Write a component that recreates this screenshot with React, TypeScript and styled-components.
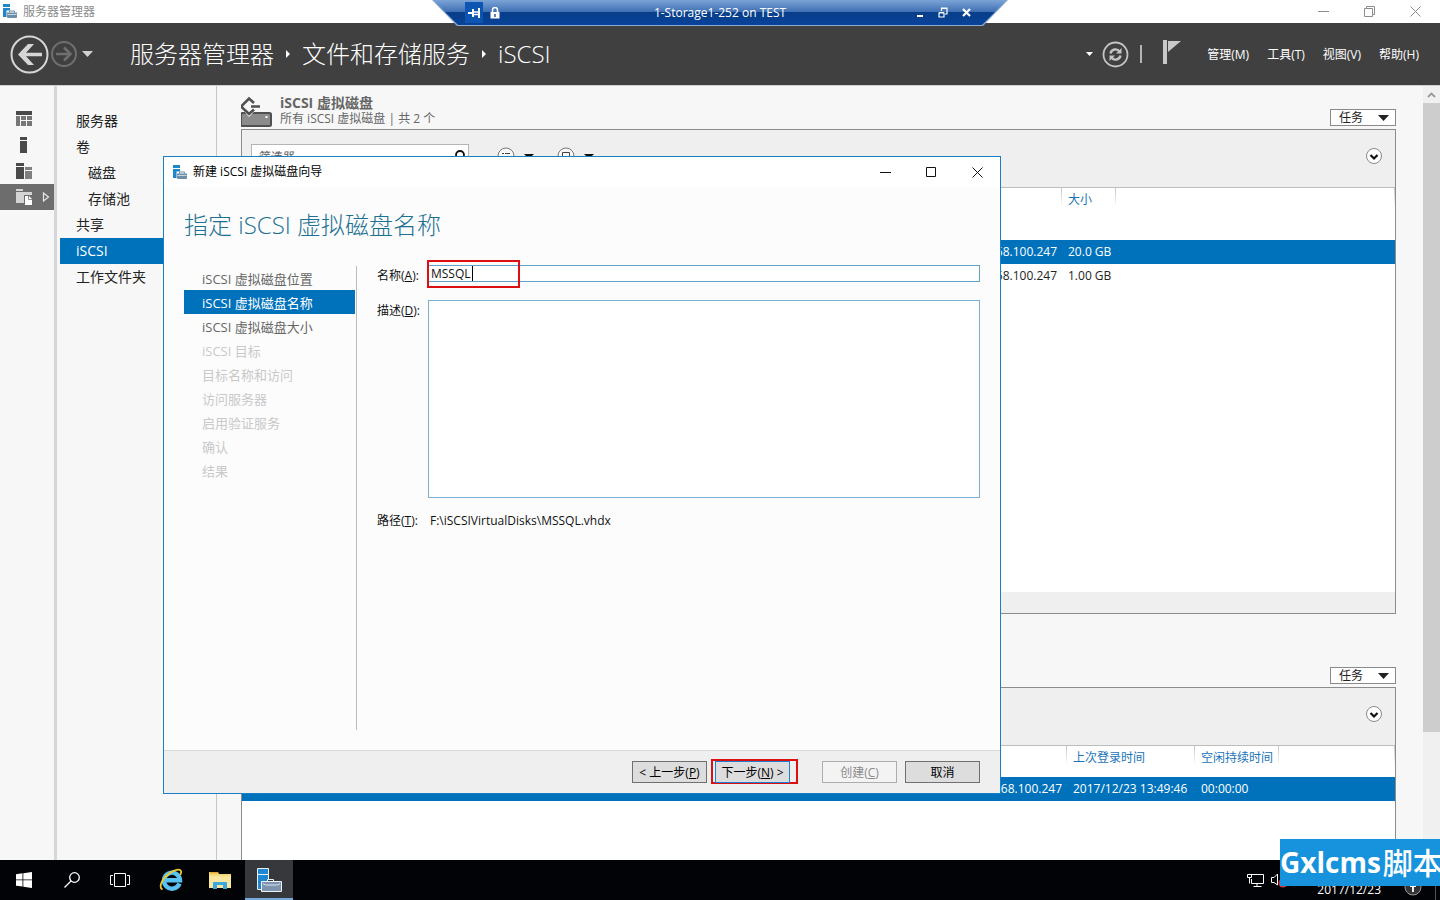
import React from "react";
import styled, { createGlobalStyle, css } from "styled-components";

const BLUE = "#0072bc";

const GlobalStyle = createGlobalStyle`
  *, *::before, *::after { box-sizing: border-box; }
  html, body { margin: 0; padding: 0; }
  body {
    font-family: "Open Sans", "Noto Sans CJK SC", sans-serif;
    font-size: 12px;
    line-height: 16px;
    color: #222;
    overflow: hidden;
  }
  button, input, textarea { font: inherit; color: inherit; margin: 0; padding: 0; border-radius: 0; }
  button { background: none; border: 0; white-space: nowrap; }
  h1, h2, h3, p, ul, ol, dl, dd { margin: 0; padding: 0; font-weight: inherit; }
  ul, ol { list-style: none; }
  a { color: inherit; text-decoration: none; }
  svg { display: block; flex: none; }
`;

const Desktop = styled.div`
  position: relative;
  display: grid;
  grid-template-rows: 23px 62px minmax(0, 1fr) 40px;
  height: 100vh;
  background: #f7f7f7;
`;

/* ---------- window title bar ---------- */

const TitleBar = styled.header`
  display: flex;
  align-items: center;
  gap: 6px;
  padding: 0 2px;
  background: #fff;
  color: #8a8a8a;
`;

const WindowControls = styled.div<{ $dark?: boolean }>`
  display: flex;
  margin-left: auto;
  color: ${(p) => (p.$dark ? "#111" : "#8c8c8c")};
`;

const WindowButton = styled.button`
  display: grid;
  place-items: center;
  width: 46px;
  height: 20px;
`;

/* ---------- remote session bar ---------- */

const SessionBar = styled.div`
  position: absolute;
  z-index: 3;
  top: 0;
  left: 50%;
  width: 576px;
  height: 26px;
  transform: translateX(-50%);
  padding: 0 1px 1px;
  background: #8fa9cf;
  clip-path: polygon(0 0, 100% 0, calc(100% - 25px) 100%, 25px 100%);
`;

const SessionInner = styled.div`
  display: grid;
  grid-template-columns: 1fr auto 1fr;
  align-items: center;
  height: 25px;
  padding: 0 32px;
  color: #fff;
  background: linear-gradient(#7ba3d6 0, #3f6fb3 12px, #083e88 12px, #08429a 25px);
  clip-path: polygon(0 0, 100% 0, calc(100% - 25px) 100%, 25px 100%);
`;

const SessionGroup = styled.div<{ $end?: boolean }>`
  display: flex;
  align-items: center;
  gap: ${(p) => (p.$end ? "5px" : "3px")};
  justify-content: ${(p) => (p.$end ? "flex-end" : "flex-start")};
`;

const SessionButton = styled.button<{ $on?: boolean }>`
  display: grid;
  place-items: center;
  width: 18px;
  height: 21px;
  background: ${(p) => (p.$on ? "#0c55b0" : "transparent")};
`;

/* ---------- dark header ---------- */

const Header = styled.div`
  display: flex;
  align-items: center;
  justify-content: space-between;
  padding: 0 21px 0 10px;
  background: #404040;
  color: #fff;
`;

const HeaderSide = styled.div`
  display: flex;
  align-items: center;
`;

const NavButton = styled.button`
  display: grid;
  place-items: center;
`;

const Breadcrumb = styled.nav`
  display: flex;
  align-items: center;
  gap: 12px;
  margin-left: 36px;
  font-size: 24px;
  line-height: 32px;
  font-weight: 300;
`;

const MenuBar = styled.nav`
  display: flex;
  gap: 18px;
  margin-left: 26px;
  padding-top: 2px;
  line-height: 20px;
`;

const Bar = styled.span`
  width: 2px;
  height: 18px;
  margin: 0 21px 0 11px;
  background: #b5b5b5;
`;

/* ---------- body ---------- */

const Body = styled.div`
  display: grid;
  grid-template-columns: 54px 163px minmax(0, 1fr) 17px;
  border-top: 1px solid #d0d0d0;
  min-height: 0;
`;

const IconRail = styled.nav`
  padding-top: 20px;
`;

const RailLink = styled.a<{ $active?: boolean }>`
  display: flex;
  align-items: center;
  gap: 9px;
  height: 26px;
  padding-left: 16px;
  background: ${(p) => (p.$active ? "#6d6d6d" : "transparent")};
`;

const SideNav = styled.nav`
  padding: 22px 0 0 3px;
  border-left: 3px solid #d6d6d6;
  border-right: 1px solid #c6c6c6;
  font-size: 14px;
`;

const SideLink = styled.a<{ $active?: boolean; $sub?: boolean }>`
  display: block;
  height: 26px;
  line-height: 26px;
  padding-left: ${(p) => (p.$sub ? "28px" : "16px")};
  ${(p) =>
    p.$active &&
    css`
      background: ${BLUE};
      color: #fff;
    `}
`;

const Main = styled.main`
  display: flex;
  flex-direction: column;
  min-height: 0;
  padding: 8px 27px 0 24px;
  overflow: hidden;
`;

const SectionHead = styled.div<{ $second?: boolean }>`
  display: flex;
  flex: none;
  align-items: flex-start;
  justify-content: space-between;
  height: ${(p) => (p.$second ? "73px" : "35px")};
  padding-top: ${(p) => (p.$second ? "53px" : "0")};
`;

const SectionTitle = styled.div`
  display: flex;
  gap: 7px;
  color: #666;
  h2 {
    font-size: 14px;
    line-height: 17px;
    font-weight: 700;
  }
`;

const TaskButton = styled.button<{ $second?: boolean }>`
  display: flex;
  align-items: center;
  justify-content: space-between;
  width: 66px;
  height: 17px;
  padding: 0 6px 0 8px;
  margin: ${(p) => (p.$second ? "0" : "15px")} 0 0 auto;
  border: 1px solid #8a8a8a;
  background: #fff;
`;

const Panel = styled.section<{ $open?: boolean }>`
  display: flex;
  flex: none;
  flex-direction: column;
  height: ${(p) => (p.$open ? "240px" : "485px")};
  border: 1px solid #8c8c8c;
  background: #fff;
`;

const PanelTools = styled.div`
  display: flex;
  flex: none;
  align-items: center;
  height: 58px;
  padding: 0 12px 5px 9px;
  background: #efefef;
  border-bottom: 1px solid #bdbdbd;
`;

const FilterBox = styled.label`
  display: flex;
  align-items: center;
  width: 218px;
  height: 25px;
  padding: 1px 2px 0 5px;
  border: 1px solid #b5b5b5;
  background: #fff;
  input {
    flex: 1;
    min-width: 0;
    border: 0;
    outline: 0;
    background: none;
  }
  input::placeholder {
    color: #555;
    font-style: italic;
    opacity: 1;
  }
`;

const ToolButton = styled.button`
  display: flex;
  align-items: center;
  gap: 9px;
  margin-left: 23px;
  &:first-of-type {
    margin-left: 28px;
  }
`;

const ExpandButton = styled.button`
  && {
    margin-left: auto;
  }
`;

const PanelFoot = styled.div`
  height: 21px;
  margin-top: auto;
  background: #efefef;
`;

const Grid = styled.table<{ $head: number }>`
  width: 100%;
  table-layout: fixed;
  border-collapse: collapse;
  th,
  td {
    height: 24px;
    padding: 0 0 0 6px;
    text-align: left;
    font-weight: 400;
    white-space: nowrap;
  }
  th {
    height: ${(p) => p.$head}px;
    padding-top: 4px;
    vertical-align: top;
    color: #1a74b8;
    background: linear-gradient(#c4c4c4, #fff) right top / 1px 19px no-repeat;
  }
`;

const Col = styled.col<{ $w?: number }>`
  width: ${(p) => (p.$w ? `${p.$w}px` : "auto")};
`;

const GridRow = styled.tr<{ $selected?: boolean }>`
  ${(p) =>
    p.$selected &&
    css`
      background: ${BLUE};
      color: #fff;
    `}
  td:first-child {
    padding-right: 5px;
    text-align: right;
  }
`;

const ScrollBar = styled.div`
  background: #f0f0f0;
`;

const ScrollArrow = styled.button`
  display: grid;
  place-items: center;
  width: 100%;
  height: 17px;
`;

const ScrollThumb = styled.div`
  height: 629px;
  background: #cdcdcd;
`;

/* ---------- wizard ---------- */

const Wizard = styled.section`
  position: absolute;
  z-index: 2;
  top: 156px;
  left: 163px;
  display: flex;
  flex-direction: column;
  width: 838px;
  height: 638px;
  border: 1px solid #1b7fc4;
  background: #fcfcfc;
`;

const WizardTitle = styled.header`
  display: flex;
  align-items: center;
  gap: 6px;
  height: 30px;
  padding-left: 8px;
  background: #fff;
  color: #000;
`;

const WizardHeading = styled.h1`
  height: 78px;
  padding: 22px 20px 0;
  font-size: 24px;
  line-height: 32px;
  font-weight: 300;
  color: #1c7193;
`;

const WizardBody = styled.div`
  display: grid;
  grid-template-columns: 173px minmax(0, 1fr);
  flex: 1;
  padding: 0 20px 20px;
`;

const Steps = styled.ol`
  margin-top: 1px;
  border-right: 1px solid #bcbcbc;
  padding-right: 1px;
  font-size: 13px;
`;

const Step = styled.li<{ $state: "open" | "active" | "off" }>`
  height: 24px;
  line-height: 26px;
  padding-left: 18px;
  color: ${(p) => (p.$state === "active" ? "#fff" : p.$state === "off" ? "#c9c9c9" : "#666")};
  background: ${(p) => (p.$state === "active" ? BLUE : "transparent")};
`;

const Form = styled.form`
  display: grid;
  grid-template-columns: 51px minmax(0, 1fr);
  grid-template-rows: 35px 210px auto;
  align-content: start;
  padding-left: 20px;
  color: #111;
`;

const Label = styled.label`
  padding-top: 3px;
  white-space: nowrap;
`;

const NameField = styled.div`
  position: relative;
`;

const NameInput = styled.input`
  display: block;
  width: 100%;
  height: 17px;
  padding: 0 2px;
  border: 1px solid #5fa3c8;
  background: #fff;
  outline: 0;
`;

const Description = styled.textarea`
  display: block;
  width: 100%;
  height: 198px;
  border: 1px solid #7ab0d4;
  background: #fff;
  resize: none;
  outline: 0;
`;

const Mark = styled.span`
  position: absolute;
  top: -5px;
  left: -1px;
  width: 93px;
  height: 28px;
  border: 2px solid #dc1010;
  pointer-events: none;
`;

const Caret = styled.span`
  position: absolute;
  top: 1px;
  left: 44px;
  width: 1px;
  height: 15px;
  background: #000;
`;

const PathValue = styled.output`
  padding: 3px 0 0 2px;
`;

const WizardFooter = styled.footer`
  display: flex;
  height: 43px;
  padding: 10px 20px 0;
  justify-content: flex-end;
  border-top: 1px solid #d9d9d9;
  background: #efefef;
`;

const DialogButton = styled.button<{ $next?: boolean }>`
  width: 75px;
  height: 22px;
  padding-top: 2px;
  border: 1px solid ${(p) => (p.$next ? "#1b7fd4" : "#707070")};
  background: #dddddd;
  color: #000;
  &:disabled {
    border-color: #adadad;
    background: #f3f3f3;
    color: #8c8c8c;
  }
  & + & {
    margin-left: 8px;
  }
`;

const NextFrame = styled.div`
  height: 25px;
  width: 87px;
  margin: -2px 24px 0 4px;
  padding-left: 2px;
  border: 2px solid #dc1010;
`;

/* ---------- task bar ---------- */

const TaskBar = styled.footer`
  position: relative;
  z-index: 3;
  display: flex;
  background: #020307;
  color: #fff;
`;

const TaskIcon = styled.button<{ $active?: boolean; $wide?: boolean }>`
  display: grid;
  place-items: center;
  width: ${(p) => (p.$wide ? "53px" : "48px")};
  height: 40px;
  border-bottom: 2px solid ${(p) => (p.$active ? "#76a9dc" : "transparent")};
  border-top: 2px solid ${(p) => (p.$active ? "#37383b" : "transparent")};
  background: ${(p) => (p.$active ? "#37383b" : "transparent")};
`;

const Tray = styled.div`
  display: flex;
  align-items: center;
  gap: 7px;
  margin-left: auto;
`;

const Clock = styled.time`
  align-self: flex-end;
  margin: 0 15px 0 23px;
  padding-bottom: 2px;
`;

const Watermark = styled.div`
  position: absolute;
  z-index: 4;
  right: 0;
  bottom: 14px;
  display: flex;
  align-items: center;
  width: 160px;
  height: 47px;
  overflow: hidden;
  background: #1792dc;
  color: #fff;
  font-size: 28px;
  line-height: 47px;
  font-weight: 700;
  white-space: nowrap;
`;

const WatermarkTail = styled.span`
  padding-left: 2px;
  font-size: 30px;
  font-weight: 500;
`;

/* ---------- drawings ---------- */

const ServerIcon = ({ size = 15 }: { size?: number }) => (
  <svg width={size} height={size} viewBox="0 0 15 15" aria-hidden="true">
    <path d="M1 0h7v3H1zM1 4h7v2.500H4.500V13H1z" fill="#1f86c9" />
    <path d="M5 8.500h10V13a1 1 0 01-1 1H6a1 1 0 01-1-1z" fill="#6d8ea8" />
    <path d="M7.500 8.500V7h5v1.500" fill="none" stroke="#6d8ea8" />
    <path d="M5.500 10.500h9" stroke="#dfe8ee" strokeWidth="0.8" />
  </svg>
);

const Down = ({ w = 10, h = 5, fill = "#111" }: { w?: number; h?: number; fill?: string }) => (
  <svg width={w} height={h} viewBox="0 0 10 5" preserveAspectRatio="none" aria-hidden="true">
    <path d="M0 0h10L5 5z" fill={fill} />
  </svg>
);

const CrumbArrow = () => (
  <svg width="4" height="8" viewBox="0 0 4 8" aria-hidden="true">
    <path d="M0 0l4 4-4 4z" fill="#fff" />
  </svg>
);

const Minimize = () => (
  <svg width="11" height="11" viewBox="0 0 11 11" stroke="currentColor" aria-hidden="true">
    <path d="M0 5.500h11" />
  </svg>
);

const Restore = () => (
  <svg width="11" height="11" viewBox="0 0 11 11" fill="none" stroke="currentColor" aria-hidden="true">
    <path d="M.5 2.500h8v8h-8zM2.500 2.500v-2h8v8h-2" />
  </svg>
);

const Maximize = () => (
  <svg width="11" height="11" viewBox="0 0 11 11" fill="none" stroke="currentColor" aria-hidden="true">
    <path d="M.5.500h9v9h-9z" />
  </svg>
);

const Close = () => (
  <svg width="11" height="11" viewBox="0 0 11 11" stroke="currentColor" aria-hidden="true">
    <path d="M.5.500l10 10M10.500.500l-10 10" />
  </svg>
);

const ChevronCircle = () => (
  <svg width="17" height="17" viewBox="0 0 17 17" fill="none" aria-hidden="true">
    <circle cx="8" cy="8" r="7.500" fill="#fff" stroke="#8a8a8a" />
    <path d="M4.500 7L8 10.500 11.500 7" stroke="#111" strokeWidth="2.200" />
  </svg>
);

const DiskIcon = () => (
  <svg width="32" height="34" viewBox="0 0 32 34" fill="none" aria-hidden="true">
    <rect x="0" y="19" width="30" height="13" rx="1.500" fill="#8b8b8b" stroke="#505050" strokeWidth="2" />
    <path d="M24.500 22h2v2h-2z" fill="#fff" />
    <path d="M8 2l10 10.500L8 23-1 12.500z" fill="#f7f7f7" />
    <path d="M13 9L8 4.500 0 12.500l8 7.500 5-4.500M10 12.500h9" stroke="#505050" strokeWidth="2.600" />
  </svg>
);

const steps: { text: string; state: "open" | "active" | "off" }[] = [
  { text: "iSCSI 虚拟磁盘位置", state: "open" },
  { text: "iSCSI 虚拟磁盘名称", state: "active" },
  { text: "iSCSI 虚拟磁盘大小", state: "open" },
  { text: "iSCSI 目标", state: "off" },
  { text: "目标名称和访问", state: "off" },
  { text: "访问服务器", state: "off" },
  { text: "启用验证服务", state: "off" },
  { text: "确认", state: "off" },
  { text: "结果", state: "off" },
];

const links = [
  { text: "服务器" },
  { text: "卷" },
  { text: "磁盘", sub: true },
  { text: "存储池", sub: true },
  { text: "共享" },
  { text: "iSCSI", active: true },
  { text: "工作文件夹" },
];

export default function App() {
  return (
    <>
      <GlobalStyle />
      <Desktop>
        <TitleBar>
          <ServerIcon />
          <span>服务器管理器</span>
          <WindowControls>
            <WindowButton aria-label="最小化"><Minimize /></WindowButton>
            <WindowButton aria-label="还原"><Restore /></WindowButton>
            <WindowButton aria-label="关闭"><Close /></WindowButton>
          </WindowControls>
        </TitleBar>

        <SessionBar>
          <SessionInner>
            <SessionGroup>
              <SessionButton $on aria-label="固定">
                <svg width="12" height="10" viewBox="0 0 12 10" fill="none" stroke="#fff" aria-hidden="true">
                  <path d="M0 5h5M5 1v8M11 0v10" strokeWidth="2" />
                  <path d="M5 4h6M5 6.500h6" strokeWidth="1.300" />
                </svg>
              </SessionButton>
              <SessionButton aria-label="锁定">
                <svg width="10" height="12" viewBox="0 0 10 12" fill="none" aria-hidden="true">
                  <path d="M2.500 5V3a2.500 2.500 0 015 0v2" stroke="#fff" strokeWidth="1.500" />
                  <path d="M.5 5h9v6.500h-9z" fill="#fff" />
                  <path d="M5 7v3" stroke="#083e88" strokeWidth="1.300" />
                </svg>
              </SessionButton>
            </SessionGroup>
            <span>1-Storage1-252 on TEST</span>
            <SessionGroup $end>
              <SessionButton aria-label="最小化会话">
                <svg width="8" height="10" viewBox="0 0 8 10" aria-hidden="true">
                  <path d="M1 7h6v2H1z" fill="#fff" />
                </svg>
              </SessionButton>
              <SessionButton aria-label="还原会话">
                <svg width="10" height="12" viewBox="0 0 10 12" fill="none" stroke="#fff" aria-hidden="true">
                  <path d="M1 6h5v4H1zM1 5.500h5M3.500 4V1h5.500v6H7M3.500 1.500H9" strokeWidth="1.200" />
                </svg>
              </SessionButton>
              <SessionButton aria-label="关闭会话">
                <svg width="9" height="9" viewBox="0 0 9 9" stroke="#fff" strokeWidth="2.200" aria-hidden="true">
                  <path d="M1 1l7 7M8 1L1 8" />
                </svg>
              </SessionButton>
            </SessionGroup>
          </SessionInner>
        </SessionBar>

        <Header>
          <HeaderSide>
            <NavButton aria-label="后退">
              <svg width="39" height="39" viewBox="0 0 39 39" fill="none" stroke="#d6d6d6" aria-hidden="true">
                <circle cx="19.500" cy="19.500" r="18" strokeWidth="2" />
                <path d="M11 19.500h21" strokeWidth="3.500" />
                <path d="M18 9h6l-9.500 10.500L24 30h-6L8 19.500z" fill="#d6d6d6" stroke="none" />
              </svg>
            </NavButton>
            <NavButton aria-label="前进">
              <svg width="29" height="28" viewBox="0 0 29 28" fill="none" stroke="#6f6f6f" aria-hidden="true">
                <circle cx="15" cy="14" r="12" strokeWidth="2" />
                <path d="M7 14h14" strokeWidth="2.500" />
                <path d="M15 7.500l6.500 6.500-6.500 6.500" strokeWidth="2.500" />
              </svg>
            </NavButton>
            <NavButton aria-label="历史记录">
              <svg width="16" height="6" viewBox="0 0 16 6" aria-hidden="true">
                <path d="M4 0h11L9.500 6z" fill="#d0d0d0" />
              </svg>
            </NavButton>
            <Breadcrumb aria-label="路径">
              <a href="#manager">服务器管理器</a>
              <CrumbArrow />
              <a href="#storage">文件和存储服务</a>
              <CrumbArrow />
              <a href="#iscsi">iSCSI</a>
            </Breadcrumb>
          </HeaderSide>
          <HeaderSide>
            <NavButton aria-label="刷新选项">
              <svg width="16" height="4" viewBox="0 0 16 4" aria-hidden="true">
                <path d="M0 0h7L3.500 4z" fill="#fff" />
              </svg>
            </NavButton>
            <NavButton aria-label="刷新">
              <svg width="27" height="27" viewBox="0 0 27 27" fill="none" stroke="#c4c4c4" aria-hidden="true">
                <circle cx="13.500" cy="13.500" r="12" strokeWidth="1.800" />
                <path d="M8.500 12.500a5 5 0 019-2M18.500 14.500a5 5 0 01-9 2" strokeWidth="2.400" />
                <path d="M19.500 7v5.500h-5.500zM7.500 20v-5.500H13z" fill="#c4c4c4" stroke="none" />
              </svg>
            </NavButton>
            <Bar />
            <NavButton aria-label="通知">
              <svg width="18" height="32" viewBox="0 0 18 32" aria-hidden="true">
                <path d="M0 2h4v24H0z" fill="#c8c8c8" />
                <path d="M5 3h13L5 14z" fill="#c8c8c8" />
              </svg>
            </NavButton>
            <MenuBar aria-label="菜单">
              <a href="#manage">管理(M)</a>
              <a href="#tools">工具(T)</a>
              <a href="#view">视图(V)</a>
              <a href="#help">帮助(H)</a>
            </MenuBar>
          </HeaderSide>
        </Header>

        <Body>
          <IconRail aria-label="视图">
            <RailLink href="#dashboard" aria-label="仪表板">
              <svg width="16" height="16" viewBox="0 0 16 16" aria-hidden="true">
                <path d="M0 0h16v4H0z" fill="#4a4a4a" />
                <path d="M0 5h4v10H0zM5 5h5v4H5zM11 5h5v4h-5zM5 10h5v5H5zM11 10h5v5h-5z" fill="#777" />
              </svg>
            </RailLink>
            <RailLink href="#local" aria-label="本地服务器">
              <svg width="16" height="16" viewBox="0 0 16 16" aria-hidden="true">
                <path d="M4 0h7v3H4zM4 4h7v12H4z" fill="#4a4a4a" />
              </svg>
            </RailLink>
            <RailLink href="#all" aria-label="所有服务器">
              <svg width="16" height="16" viewBox="0 0 16 16" aria-hidden="true">
                <path d="M0 0h8v3H0zM0 4h8v12H0z" fill="#4a4a4a" />
                <path d="M9 4h7v3H9zM9 8h7v8H9z" fill="#808080" />
              </svg>
            </RailLink>
            <RailLink href="#files" aria-label="文件和存储服务" $active>
              <svg width="17" height="17" viewBox="0 0 17 17" aria-hidden="true">
                <path d="M0 0h7v2H0zM0 3h16v3H8v8H0z" fill="#d4d4d4" />
                <path d="M8.500 6.500h4.500l3.500 3.500v6.500h-8z" fill="#fff" stroke="#6d6d6d" />
                <path d="M12.500 7v3.500H16" fill="none" stroke="#8a8a8a" />
              </svg>
              <svg width="8" height="10" viewBox="0 0 8 10" aria-hidden="true">
                <path d="M1.500 1l5 4-5 4z" fill="none" stroke="#e6e6e6" strokeWidth="1.200" />
              </svg>
            </RailLink>
          </IconRail>

          <SideNav aria-label="文件和存储服务">
            {links.map((l) => (
              <SideLink key={l.text} href="#section" $active={l.active} $sub={l.sub}>
                {l.text}
              </SideLink>
            ))}
          </SideNav>

          <Main>
            <SectionHead>
              <SectionTitle>
                <DiskIcon />
                <div>
                  <h2>iSCSI 虚拟磁盘</h2>
                  <p>所有 iSCSI 虚拟磁盘 | 共 2 个</p>
                </div>
              </SectionTitle>
              <TaskButton>
                任务 <Down w={11} h={6} fill="#222" />
              </TaskButton>
            </SectionHead>
            <Panel>
              <PanelTools>
                <FilterBox>
                  <input type="text" aria-label="筛选器" placeholder="筛选器" />
                  <svg width="12" height="14" viewBox="0 0 12 14" fill="none" stroke="#111" aria-hidden="true">
                    <circle cx="6" cy="5" r="4" strokeWidth="1.800" />
                    <path d="M3 8l-3 5" strokeWidth="2" />
                  </svg>
                </FilterBox>
                <ToolButton aria-label="保存的查询">
                  <svg width="18" height="18" viewBox="0 0 18 18" fill="none" aria-hidden="true">
                    <circle cx="9" cy="9" r="8" fill="#f8f8f8" stroke="#777" />
                    <path d="M5 6.500h2M8 6.500h5M5 9.500h2M8 9.500h5M5 12.500h2M8 12.500h5" stroke="#444" />
                  </svg>
                  <Down />
                </ToolButton>
                <ToolButton aria-label="保存查询">
                  <svg width="18" height="18" viewBox="0 0 18 18" fill="none" aria-hidden="true">
                    <circle cx="9" cy="9" r="8" fill="#f8f8f8" stroke="#777" />
                    <path d="M5.500 5.500h7v7h-7zM5.500 9.500h7" stroke="#444" />
                  </svg>
                  <Down />
                </ToolButton>
                <ExpandButton aria-label="展开筛选条件">
                  <ChevronCircle />
                </ExpandButton>
              </PanelTools>
              <Grid $head={52}>
                <colgroup>
                  <Col $w={820} />
                  <Col $w={54} />
                  <Col />
                </colgroup>
                <thead>
                  <tr>
                    <th />
                    <th>大小</th>
                    <th />
                  </tr>
                </thead>
                <tbody>
                  <GridRow $selected>
                    <td>192.168.100.247</td>
                    <td>20.0 GB</td>
                    <td />
                  </GridRow>
                  <GridRow>
                    <td>192.168.100.247</td>
                    <td>1.00 GB</td>
                    <td />
                  </GridRow>
                </tbody>
              </Grid>
              <PanelFoot />
            </Panel>

            <SectionHead $second>
              <TaskButton $second>
                任务 <Down w={11} h={6} fill="#222" />
              </TaskButton>
            </SectionHead>
            <Panel $open>
              <PanelTools>
                <ExpandButton aria-label="展开筛选条件">
                  <ChevronCircle />
                </ExpandButton>
              </PanelTools>
              <Grid $head={31}>
                <colgroup>
                  <Col $w={825} />
                  <Col $w={128} />
                  <Col $w={84} />
                  <Col />
                </colgroup>
                <thead>
                  <tr>
                    <th />
                    <th>上次登录时间</th>
                    <th>空闲持续时间</th>
                    <th />
                  </tr>
                </thead>
                <tbody>
                  <GridRow $selected>
                    <td>192.168.100.247</td>
                    <td>2017/12/23 13:49:46</td>
                    <td>00:00:00</td>
                    <td />
                  </GridRow>
                </tbody>
              </Grid>
            </Panel>
          </Main>

          <ScrollBar>
            <ScrollArrow aria-label="向上滚动">
              <svg width="9" height="6" viewBox="0 0 9 6" fill="none" stroke="#999" strokeWidth="1.800" aria-hidden="true">
                <path d="M1 5l3.500-3.500L8 5" />
              </svg>
            </ScrollArrow>
            <ScrollThumb />
          </ScrollBar>
        </Body>

        <Wizard role="dialog" aria-label="新建 iSCSI 虚拟磁盘向导">
          <WizardTitle>
            <ServerIcon />
            <span>新建 iSCSI 虚拟磁盘向导</span>
            <WindowControls $dark>
              <WindowButton aria-label="最小化"><Minimize /></WindowButton>
              <WindowButton aria-label="最大化"><Maximize /></WindowButton>
              <WindowButton aria-label="关闭"><Close /></WindowButton>
            </WindowControls>
          </WizardTitle>
          <WizardHeading>指定 iSCSI 虚拟磁盘名称</WizardHeading>
          <WizardBody>
            <Steps>
              {steps.map((s) => (
                <Step key={s.text} $state={s.state}>
                  {s.text}
                </Step>
              ))}
            </Steps>
            <Form id="wizard-form" onSubmit={(e) => e.preventDefault()}>
              <Label htmlFor="disk-name">名称(<u>A</u>):</Label>
              <NameField>
                <NameInput id="disk-name" type="text" defaultValue="MSSQL" />
                <Caret />
                <Mark />
              </NameField>
              <Label htmlFor="disk-description">描述(<u>D</u>):</Label>
              <Description id="disk-description" />
              <Label htmlFor="disk-path">路径(<u>T</u>):</Label>
              <PathValue id="disk-path">F:\iSCSIVirtualDisks\MSSQL.vhdx</PathValue>
            </Form>
          </WizardBody>
          <WizardFooter>
            <DialogButton type="button">&lt; 上一步(<u>P</u>)</DialogButton>
            <NextFrame>
              <DialogButton type="submit" form="wizard-form" $next>下一步(<u>N</u>) &gt;</DialogButton>
            </NextFrame>
            <DialogButton type="button" disabled>创建(<u>C</u>)</DialogButton>
            <DialogButton type="button">取消</DialogButton>
          </WizardFooter>
        </Wizard>

        <TaskBar>
          <TaskIcon aria-label="开始">
            <svg width="16" height="16" viewBox="0 0 16 16" fill="#fff" aria-hidden="true">
              <path d="M0 2.200l6.500-.9v6.200H0zM7.300 1.200L16 0v7.500H7.300zM0 8.300h6.500v6.300L0 13.700zM7.300 8.300H16V16l-8.700-1.200z" />
            </svg>
          </TaskIcon>
          <TaskIcon aria-label="搜索">
            <svg width="16" height="16" viewBox="0 0 16 16" fill="none" stroke="#fff" strokeWidth="1.300" aria-hidden="true">
              <circle cx="10.500" cy="5.500" r="4.800" />
              <path d="M7 9l-6.500 6.500" />
            </svg>
          </TaskIcon>
          <TaskIcon aria-label="任务视图">
            <svg width="20" height="14" viewBox="0 0 20 14" fill="none" stroke="#fff" aria-hidden="true">
              <path d="M4.500.500h11v13h-11zM3 2.500H.5v9H3M17 2.500h2.500v9H17" />
            </svg>
          </TaskIcon>
          <TaskIcon $wide aria-label="Internet Explorer">
            <svg width="24" height="24" viewBox="0 0 24 24" fill="none" aria-hidden="true">
              <path d="M20.500 15.500a8 8 0 11.500-3.300H7" stroke="#58c2f2" strokeWidth="4.400" />
              <path d="M3.500 21.500C-1 19 3.500 10 10 5.500 15.500 1.500 21 .5 22 3c.4 1 0 2.500-.8 4" stroke="#f2c72c" strokeWidth="1.800" />
            </svg>
          </TaskIcon>
          <TaskIcon aria-label="文件资源管理器">
            <svg width="24" height="19" viewBox="0 0 24 19" aria-hidden="true">
              <path d="M0 1h9l1 2h12v14H0z" fill="#f7d978" />
              <path d="M1 1h8v1.500H1z" fill="#e2ac35" />
              <path d="M0 5h22v12H0z" fill="#fbe6a0" />
              <path d="M4 18v-7h14v7h-4v-4H8v4z" fill="#3da7dd" />
            </svg>
          </TaskIcon>
          <TaskIcon $active aria-label="服务器管理器">
            <svg width="25" height="25" viewBox="0 0 25 25" aria-hidden="true">
              <path d="M.5.500h11v6H.5zM.5 6.500h11v15H.5z" fill="#1f86d0" stroke="#e8f2fa" />
              <path d="M10.500 13.500v-2h6v2" fill="#37383b" stroke="#e8f2fa" />
              <path d="M4.500 13.500h20v10h-20z" fill="#7d93ae" stroke="#eef3f8" />
              <path d="M6 15.500c1 1.500 3 1.500 5 1.500h7c2 0 4 0 5-1.500" fill="none" stroke="#dfe8f0" />
            </svg>
          </TaskIcon>
          <Tray>
            <svg width="17" height="15" viewBox="0 0 17 15" fill="none" stroke="#fff" aria-hidden="true">
              <path d="M4 1.500h12.500v9H4.500V6M10 11v3M6.500 13.500h8M.5 1.500h4v3h-4zM2.500 4.500v6" />
            </svg>
            <svg width="16" height="16" viewBox="0 0 16 16" aria-hidden="true">
              <path d="M.5 5.500H3l3.500-3.500v11L3 10.500H.5z" fill="none" stroke="#fff" />
              <circle cx="12" cy="11" r="4.500" fill="#d8353f" />
            </svg>
            <Clock>2017/12/23</Clock>
            <svg width="20" height="32" viewBox="0 0 20 32" aria-hidden="true">
              <circle cx="10" cy="23" r="8" fill="#333" stroke="#999" />
              <path d="M10 17v11M7 22h6" stroke="#fff" strokeWidth="1.800" />
            </svg>
            <svg width="10" height="40" viewBox="0 0 10 40" aria-hidden="true">
              <path d="M5.500 0v40" stroke="#555" />
            </svg>
          </Tray>
          <Watermark>
            Gxlcms<WatermarkTail>脚本</WatermarkTail>
          </Watermark>
        </TaskBar>
      </Desktop>
    </>
  );
}
